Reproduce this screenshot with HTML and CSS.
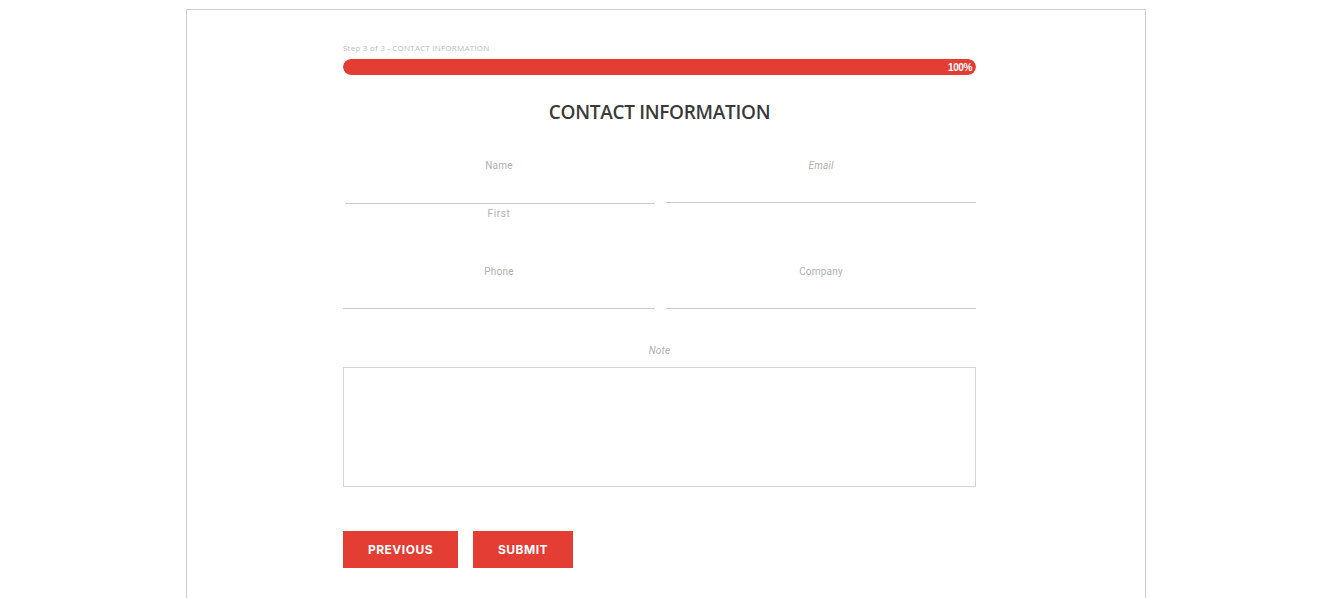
FILE: index.html
```html
<!DOCTYPE html>
<html>
<head>
<meta charset="utf-8">
<link rel="stylesheet" href="styles.css">
</head>
<body>
<div class="frame">
  <form class="form">
    <div class="step">Step 3 of 3 - CONTACT INFORMATION</div>
    <div class="progress"><div class="progress-fill" style="width:100%"><span>100%</span></div></div>
    <h2 class="title">CONTACT INFORMATION</h2>
    <div class="grid">
      <div class="field">
        <label class="label">Name</label>
        <div class="input input-name"></div>
        <div class="sublabel">First</div>
      </div>
      <div class="field">
        <label class="label label-italic">Email</label>
        <div class="input"></div>
      </div>
      <div class="field">
        <label class="label">Phone</label>
        <div class="input"></div>
      </div>
      <div class="field">
        <label class="label">Company</label>
        <div class="input"></div>
      </div>
    </div>
    <div class="field note">
      <label class="label label-italic">Note</label>
      <div class="textarea"></div>
    </div>
    <div class="actions">
      <button type="button" class="btn btn-prev">PREVIOUS</button>
      <button type="button" class="btn btn-submit">SUBMIT</button>
    </div>
  </form>
</div>
</body>
</html>
```
FILE: styles.css
```css
html, body {
  margin: 0;
  padding: 0;
  background: #fff;
  overflow: hidden;
}
.frame {
  box-sizing: border-box;
  width: 960px;
  min-height: 640px;
  margin: 9px 0 0 186px;
  border: 1px solid #cfcfcf;
  padding: 32px 0 0 156px;
}
.form {
  width: 633px;
  display: flex;
  flex-direction: column;
}
.step {
  font-family: "Open Sans", sans-serif;
  font-size: 8px;
  line-height: 12px;
  color: #bdbdbd;
  letter-spacing: 0.22px;
}
.progress {
  margin-top: 5px;
  height: 16px;
  border-radius: 8px;
  background: #eee;
  overflow: hidden;
}
.progress-fill {
  height: 100%;
  background: #e43d33;
  border-radius: 8px;
  display: flex;
  align-items: center;
  justify-content: flex-end;
  padding-right: 4px;
  box-sizing: border-box;
}
.progress-fill span {
  font-family: "Liberation Sans", Arial, sans-serif;
  font-weight: 700;
  font-size: 10px;
  color: #fff;
  letter-spacing: -0.4px;
}
.title {
  margin: 25px 0 0;
  text-align: center;
  font-family: "Open Sans", sans-serif;
  font-weight: 600;
  font-size: 19px;
  line-height: 24px;
  color: #3a3a3a;
  letter-spacing: -0.3px;
}
.grid {
  margin-top: 35px;
  display: grid;
  grid-template-columns: 312px 310px;
  column-gap: 11px;
  row-gap: 44px;
  align-items: start;
}
.field {
  display: flex;
  flex-direction: column;
}
.label {
  display: block;
  text-align: center;
  font-family: "Roboto", sans-serif;
  font-size: 10px;
  line-height: 14px;
  color: #b0b0b0;
  letter-spacing: 0.2px;
}
.label-italic {
  font-style: italic;
}
.input {
  box-sizing: border-box;
  height: 30px;
  border-bottom: 1px solid #cacaca;
}
.input-name {
  margin-left: 2px;
  height: 31px;
}
.sublabel {
  margin-top: 3px;
  text-align: center;
  font-family: "Roboto", sans-serif;
  font-size: 10px;
  line-height: 14px;
  color: #b0b0b0;
  letter-spacing: 0.6px;
}
.note {
  margin-top: 35px;
}
.textarea {
  margin-top: 9px;
  box-sizing: border-box;
  height: 120px;
  border: 1px solid #d4d4d4;
}
.actions {
  margin-top: 44px;
  display: flex;
  gap: 15px;
}
.btn {
  box-sizing: border-box;
  height: 37px;
  border: 0;
  border-radius: 0;
  background: #e43d33;
  color: #fff;
  font-family: "Inter", sans-serif;
  font-weight: 700;
  font-size: 12px;
  letter-spacing: 0.5px;
  padding: 0;
  cursor: pointer;
}
.btn-prev { width: 115px; }
.btn-submit { width: 100px; }
```
